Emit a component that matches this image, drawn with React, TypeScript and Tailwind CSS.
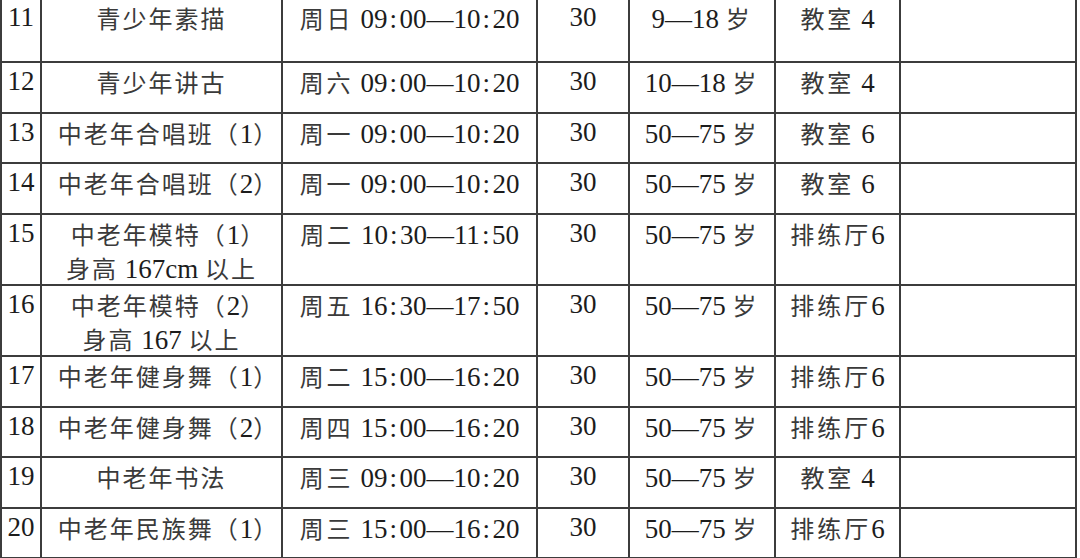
import React from "react";

type Row = {
  no: string;
  name: string[];
  time: string;
  cap: string;
  age: string;
  room: string;
  h: string;
};

const rows: Row[] = [
  { no: "11", name: ["青少年素描"], time: "周日 09:00—10:20", cap: "30", age: "9—18 岁", room: "教室 4", h: "h-[64px]" },
  { no: "12", name: ["青少年讲古"], time: "周六 09:00—10:20", cap: "30", age: "10—18 岁", room: "教室 4", h: "h-[51px]" },
  { no: "13", name: ["中老年合唱班（1）"], time: "周一 09:00—10:20", cap: "30", age: "50—75 岁", room: "教室 6", h: "h-[50px]" },
  { no: "14", name: ["中老年合唱班（2）"], time: "周一 09:00—10:20", cap: "30", age: "50—75 岁", room: "教室 6", h: "h-[51px]" },
  { no: "15", name: ["中老年模特（1）", "身高 167cm 以上"], time: "周二 10:30—11:50", cap: "30", age: "50—75 岁", room: "排练厅6", h: "h-[70px]" },
  { no: "16", name: ["中老年模特（2）", "身高 167 以上"], time: "周五 16:30—17:50", cap: "30", age: "50—75 岁", room: "排练厅6", h: "h-[70px]" },
  { no: "17", name: ["中老年健身舞（1）"], time: "周二 15:00—16:20", cap: "30", age: "50—75 岁", room: "排练厅6", h: "h-[51px]" },
  { no: "18", name: ["中老年健身舞（2）"], time: "周四 15:00—16:20", cap: "30", age: "50—75 岁", room: "排练厅6", h: "h-[50px]" },
  { no: "19", name: ["中老年书法"], time: "周三 09:00—10:20", cap: "30", age: "50—75 岁", room: "教室 4", h: "h-[51px]" },
  { no: "20", name: ["中老年民族舞（1）"], time: "周三 15:00—16:20", cap: "30", age: "50—75 岁", room: "排练厅6", h: "h-[50px]" },
];

const CJK = /[\u3000-\u9fff\uff00-\uffef]/;

function Txt({ s, tight }: { s: string; tight?: boolean }) {
  const parts = s.split(/([\u3000-\u9fff\uff00-\uffef]+|:)/).filter(Boolean);
  return (
    <>
      {parts.map((p, i) => {
        if (p === ":")
          return (
            <span key={i} className="inline-block w-[12px] text-center">
              :
            </span>
          );
        if (CJK.test(p))
          return (
            <span
              key={i}
              className={
                "text-[24px] text-[#3a3a3a] [font-family:'Noto_Sans_CJK_SC',sans-serif] " +
                (tight ? "tracking-[2px]" : "tracking-[3px]")
              }
            >
              {p}
            </span>
          );
        return <span key={i}>{p}</span>;
      })}
    </>
  );
}

const td = "border-2 border-[#3c3c3c] p-0 pt-[1px] align-top text-center leading-[35px] whitespace-nowrap overflow-hidden";

export default function App() {
  return (
    <div className="h-[558px] w-[1080px] overflow-hidden bg-white">
      <table className="-mt-[3px] w-[1077px] table-fixed border-collapse text-[27px] text-[#1c1c1c] [font-family:'Liberation_Serif','Noto_Sans_CJK_SC',serif]">
        <colgroup>
          <col className="w-[40px]" />
          <col className="w-[241px]" />
          <col className="w-[255px]" />
          <col className="w-[92px]" />
          <col className="w-[146px]" />
          <col className="w-[125px]" />
          <col className="w-[176px]" />
        </colgroup>
        <tbody>
          {rows.map((r) => {
            const two = r.name.length > 1;
            return (
              <tr key={r.no} className={r.h}>
                <td className={td}>{r.no}</td>
                <td className={td + (two ? " pt-0" : "")}>
                  {r.name.map((n, i) => (
                    <div
                      key={i}
                      className={(two ? "h-[34px] " : "") + (n.includes("（") ? "pl-[14px]" : "")}
                    >
                      <Txt s={n} tight />
                    </div>
                  ))}
                </td>
                <td className={td}>
                  <Txt s={r.time} />
                </td>
                <td className={td}>{r.cap}</td>
                <td className={td}>
                  <Txt s={r.age} />
                </td>
                <td className={td}>
                  <Txt s={r.room} />
                </td>
                <td className={td}></td>
              </tr>
            );
          })}
          <tr className="h-[50px]">
            <td className={td}></td>
            <td className={td}></td>
            <td className={td}></td>
            <td className={td}></td>
            <td className={td}></td>
            <td className={td}></td>
            <td className={td}></td>
          </tr>
        </tbody>
      </table>
    </div>
  );
}
